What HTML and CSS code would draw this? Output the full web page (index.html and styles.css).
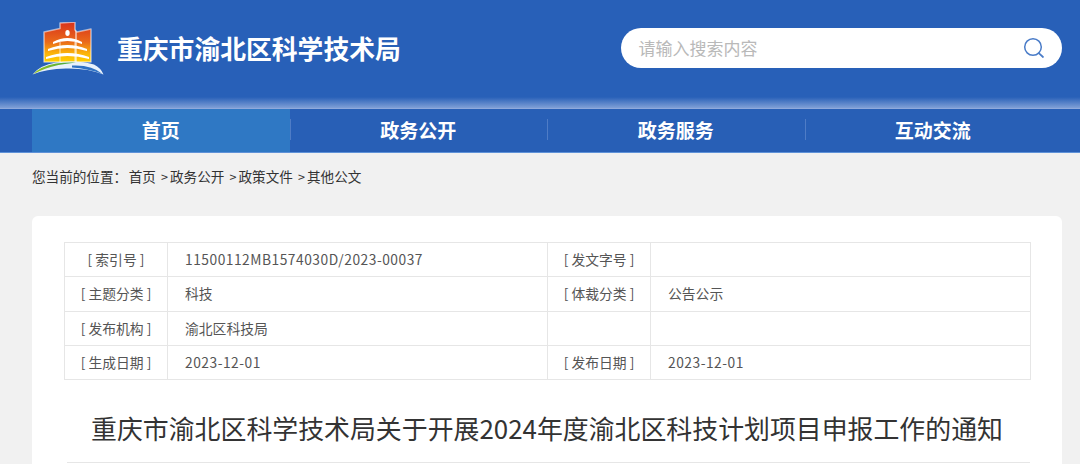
FILE: index.html
```html
<!DOCTYPE html>
<html lang="zh-CN">
<head>
<meta charset="utf-8">
<title>重庆市渝北区科学技术局</title>
<link rel="stylesheet" href="styles.css">
</head>
<body>
<header class="masthead">
  <div class="brand">
    <svg class="logo" width="72" height="54" viewBox="0 0 72 54" aria-hidden="true">
      <defs>
        <linearGradient id="flag" x1="0" y1="0" x2="0" y2="1">
          <stop offset="0" stop-color="#d8321c"/>
          <stop offset="0.5" stop-color="#ea6a1a"/>
          <stop offset="0.78" stop-color="#fbb30a"/>
          <stop offset="1" stop-color="#ffd000"/>
        </linearGradient>
        <linearGradient id="arc" x1="0" y1="0" x2="1" y2="0">
          <stop offset="0" stop-color="#9ac61e"/>
          <stop offset="1" stop-color="#37a24a"/>
        </linearGradient>
      </defs>
      <path d="M12 10 L28 6.500 L28 1 L43 0 L43 8 L45 10 L59 7 L59 40 L12 40 Z" fill="url(#flag)" stroke="#fff" stroke-opacity=".55" stroke-width="1.500" stroke-linejoin="round"/>
      <path d="M43 7 L45 10 L45 40 L43 40 Z" fill="#fff" opacity=".5"/>
      <ellipse cx="35.500" cy="11" rx="2.200" ry="3" fill="#fff"/>
      <path d="M21 20 Q35.500 12 50 20 L50 22 Q35.500 16 21 22 Z" fill="#fff"/>
      <path d="M16 27 Q35.500 19 55 27 L55 29 Q35.500 23 16 29 Z" fill="#fff"/>
      <path d="M14 35 Q35.500 27 57 35 L57 37 Q35.500 31 14 37 Z" fill="#fff"/>
      <path d="M28 20 V40 M43 20 V40" stroke="#fff" stroke-width="1" opacity=".75"/>
      <path d="M0.500 52.500 Q8 43 24 40.500 Q46 37.500 62 42.500 Q69 46 71.500 52.500 Q56 46 34 46.500 Q14 47 0.500 52.500 Z" fill="#e8f1fb"/>
      <path d="M1.500 52 Q8 44.500 24 41.500 Q34 40 44 40.500 Q24 42.500 14 46.500 Q7 49 1.500 52 Z" fill="url(#arc)"/>
      <path d="M40 43.500 Q60 42.500 70.500 52 Q56 46.500 40 45.500 Z" fill="#2f72c4"/>
    </svg>
    <h1 class="site-name">重庆市渝北区科学技术局</h1>
  </div>
  <div class="search">
    <span class="search-hint">请输入搜索内容</span>
    <svg class="search-icon" width="22" height="22" viewBox="0 0 22 22" aria-hidden="true">
      <circle cx="10" cy="10" r="8.300" fill="none" stroke="#4a7cc8" stroke-width="1.500"/>
      <path d="M15.800 16.200 L20 20" stroke="#4a7cc8" stroke-width="1.700" stroke-linecap="round"/>
    </svg>
  </div>
</header>
<nav class="nav">
  <a class="nav-item is-active">首页</a>
  <a class="nav-item">政务公开</a>
  <a class="nav-item">政务服务</a>
  <a class="nav-item">互动交流</a>
</nav>
<main class="page">
  <div class="crumbs">您当前的位置：<span class="first">首页</span><span class="sep">&gt;</span><span>政务公开</span><span class="sep">&gt;</span><span>政策文件</span><span class="sep">&gt;</span><span>其他公文</span></div>
  <article class="card">
    <table class="meta">
      <tr><th>[ 索引号 ]</th><td class="num">11500112MB1574030D/2023-00037</td><th>[ 发文字号 ]</th><td></td></tr>
      <tr><th>[ 主题分类 ]</th><td>科技</td><th>[ 体裁分类 ]</th><td>公告公示</td></tr>
      <tr><th>[ 发布机构 ]</th><td>渝北区科技局</td><th></th><td></td></tr>
      <tr><th>[ 生成日期 ]</th><td class="num">2023-12-01</td><th>[ 发布日期 ]</th><td class="num">2023-12-01</td></tr>
    </table>
    <h2 class="doc-title">重庆市渝北区科学技术局关于开展2024年度渝北区科技计划项目申报工作的通知</h2>
  </article>
</main>
</body>
</html>
```
FILE: styles.css
```css
* { box-sizing: border-box; }
html, body { margin: 0; padding: 0; }
body {
  height: 464px;
  overflow: hidden;
  background: #f1f1f1;
  font-family: "Noto Sans CJK SC", "Noto Sans", sans-serif;
  color: #333;
}
.masthead {
  height: 108px;
  padding: 22px 18px 0 32px;
  display: flex;
  justify-content: space-between;
  background: linear-gradient(to bottom, #2860b8 0, #2860b8 97px, #7f9fd6 108px);
}
.brand { display: flex; align-items: flex-start; }
.logo { display: block; }
.site-name {
  margin: 7px 0 0 13px;
  font-size: 25.800px;
  line-height: 38px;
  font-weight: 700;
  color: #fff;
}
.search {
  width: 441px;
  height: 40px;
  margin-top: 6px;
  padding: 0 17px 2px 17.500px;
  display: flex;
  align-items: center;
  justify-content: space-between;
  background: #fff;
  border-radius: 20px;
}
.search-hint { font-size: 17px; color: #b9b9b9; }
.search-icon { display: block; position: relative; top: 1px; }
.nav {
  height: 45px;
  padding: 0 18px 2px 32px;
  display: grid;
  grid-template-columns: repeat(4, 1fr);
  background: #285fb6;
  border-top: 1px solid #8fa9db;
  border-bottom: 1px solid #5f92d8;
}
.nav-item {
  display: flex;
  align-items: center;
  justify-content: center;
  font-size: 19px;
  font-weight: 700;
  color: #fff;
  background-image: linear-gradient(#4f7cc6, #4f7cc6);
  background-size: 1px 21px;
  background-position: left center;
  background-repeat: no-repeat;
}
.nav-item:last-child { padding-right: 1px; }
.nav-item.is-active {
  margin-bottom: -2px;
  padding-bottom: 2px;
  background-image: none;
  background-color: #2f78c4;
}
.page { padding: 0 18px 0 32px; }
.crumbs {
  height: 63px;
  padding-top: 12px;
  font-size: 13.600px;
  line-height: 22px;
  color: #333;
}
.crumbs .first { margin-left: 1.500px; }
.crumbs .sep { margin: 0 2px 0 5.200px; font-size: 12.500px; }
.card {
  padding: 26px 32px 0 32px;
  height: 248px;
  overflow: hidden;
  background: #fff;
  border-radius: 6px 6px 0 0;
}
.meta {
  width: 966px;
  table-layout: fixed;
  border-collapse: collapse;
  font-size: 13.800px;
  color: #555;
}
.meta tr { height: 34.250px; }
.meta th, .meta td {
  padding: 0 0 1px;
  border: 1px solid #e6e6e6;
  font-weight: 400;
}
.meta th { width: 103px; text-align: center; }
.meta td { width: 380px; padding-left: 17px; }
.meta .num { letter-spacing: .5px; }
.doc-title {
  height: 83px;
  margin: 0 0 0 3px;
  padding: 28px 3px 0 0;
  border-bottom: 1px solid #e6e6e6;
  width: 963px;
  font-size: 25.900px;
  line-height: 40px;
  font-weight: 400;
  color: #333;
  text-align: center;
  white-space: nowrap;
}
```
